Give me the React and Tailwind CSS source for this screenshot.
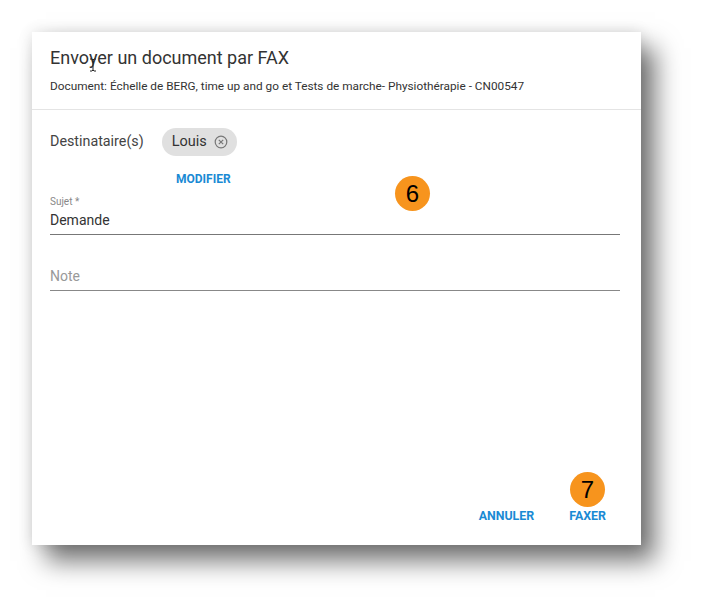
export default function App() {
  const font = { fontFamily: "Roboto, 'Liberation Sans', sans-serif" };
  return (
    <div className="w-[706px] h-[610px] bg-white relative overflow-hidden" style={font}>
      <div className="absolute left-[32px] top-[32px] w-[609px] h-[513px] bg-white flex flex-col shadow-[14px_16px_24px_rgba(0,0,0,0.55),0_0_14px_rgba(0,0,0,0.12)]">
        <div className="px-[18px] pt-[14px] h-[78px] border-b border-[#e4e4e4] relative">
          <div className="text-[18px] leading-[24px] text-[#333]">Envoyer un document par FAX</div>
          <div className="text-[11.8px] leading-[14px] text-[#333] mt-[9px]">Document: Échelle de BERG, time up and go et Tests de marche- Physiothérapie - CN00547</div>
          <svg className="absolute left-[57px] top-[26px]" width="8" height="14" viewBox="0 0 8 14">
            <path d="M1 1h2l1 1 1-1h2M4 2v10M1 13h2l1-1 1 1h2" stroke="#222" strokeWidth="1" fill="none" />
          </svg>
        </div>
        <div className="pl-[18px] pr-[21px] flex-1 flex flex-col">
          <div className="flex items-center mt-[18px] h-[28px]">
            <span className="text-[14.3px] text-[#444]">Destinataire(s)</span>
            <div className="ml-[18px] h-[28px] rounded-full bg-[#e0e0e0] flex items-center pl-[10px] pr-[9px] gap-[7px]">
              <span className="text-[14.5px] text-[#333]">Louis</span>
              <svg width="14" height="14" viewBox="0 0 14 14">
                <circle cx="7" cy="7" r="5.8" stroke="#777" strokeWidth="1.2" fill="none" />
                <path d="M4.8 4.8l4.4 4.4M9.2 4.8l-4.4 4.4" stroke="#777" strokeWidth="1.2" />
              </svg>
            </div>
          </div>
          <div className="ml-[126px] mt-[15px] text-[12px] font-bold text-[#1a8ad4] leading-[16px]">MODIFIER</div>
          <div className="mt-[9px] text-[10px] leading-[12px] text-[#888]">Sujet *</div>
          <div className="text-[14px] leading-[20px] text-[#333] mt-[2px] pb-[4px] border-b border-[#777]">Demande</div>
          <div className="text-[14px] leading-[20px] text-[#999] mt-[31px] pb-[4px] border-b border-[#888]">Note</div>
          <div className="flex-1" />
          <div className="flex justify-end gap-[35px] pr-[14px] pb-[19px]">
            <span className="text-[12.4px] font-bold text-[#1a8ad4]">ANNULER</span>
            <span className="text-[12.4px] font-bold text-[#1a8ad4]">FAXER</span>
          </div>
        </div>
      </div>
      <div className="absolute left-[395px] top-[176px] w-[35px] h-[35px] rounded-full bg-[#f7941d] flex items-center justify-center text-[24px] text-black" style={{ fontFamily: "'Liberation Sans', Arial, sans-serif" }}>6</div>
      <div className="absolute left-[570px] top-[472px] w-[35px] h-[35px] rounded-full bg-[#f7941d] flex items-center justify-center text-[24px] text-black" style={{ fontFamily: "'Liberation Sans', Arial, sans-serif" }}>7</div>
    </div>
  );
}
